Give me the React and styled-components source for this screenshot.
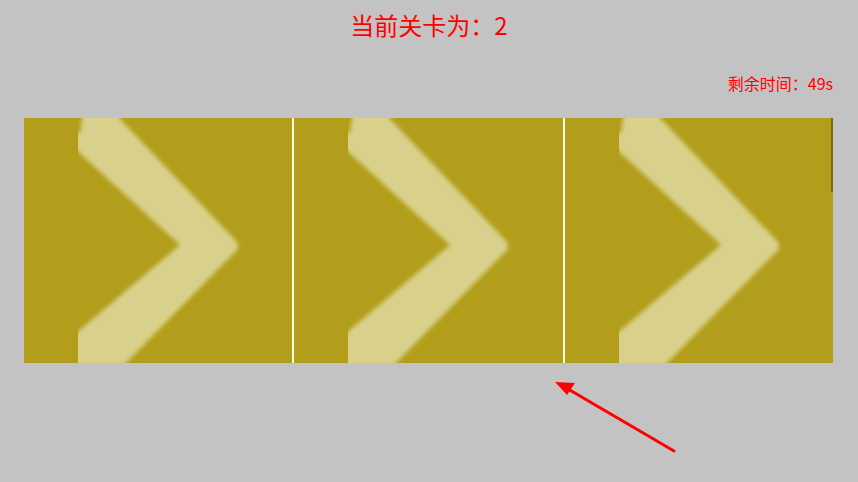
import React from "react";
import styled, { createGlobalStyle } from "styled-components";

const Global = createGlobalStyle`
  html, body { margin: 0; padding: 0; background: #c3c3c3; }
  body { font-family: "Noto Sans CJK SC", "Noto Sans", sans-serif; }
`;

const Page = styled.div`
  position: relative;
  width: 858px;
  height: 482px;
  box-sizing: border-box;
  padding: 8px 25px 0 24px;
  display: flex;
  flex-direction: column;
  background: #c3c3c3;
  overflow: hidden;
`;

const Title = styled.div`
  text-align: center;
  color: #ff0000;
  font-size: 24px;
  line-height: 34px;
  padding-left: 1px;
`;

const Timer = styled.div`
  margin-top: 30px;
  text-align: right;
  color: #ff0000;
  font-size: 16px;
  line-height: 22px;
`;

const Strip = styled.div`
  position: relative;
  margin-top: 24px;
  width: 809px;
  height: 245px;
  display: flex;
  gap: 2px;
  background: #fffbe8;
`;

const Tile = styled.div`
  flex: 1;
  position: relative;
  background: #b29e1a;
  overflow: hidden;
`;

const ScrollThumb = styled.div`
  position: absolute;
  right: 0;
  top: 0;
  width: 2px;
  height: 74px;
  background: #7a6b10;
`;

const ArrowLayer = styled.svg`
  position: absolute;
  left: 0;
  top: 0;
  pointer-events: none;
`;

function Chevron({ id }) {
  return (
    <svg width="268" height="245" viewBox="0 0 268 245" style={{ display: "block" }}>
      <defs>
        <filter id={`b${id}`} x="-20%" y="-20%" width="140%" height="140%">
          <feGaussianBlur stdDeviation="2.2" />
        </filter>
        <clipPath id={`c${id}`}>
          <rect x="54" y="0" width="214" height="245" />
        </clipPath>
      </defs>
      <g clipPath={`url(#c${id})`}>
        <polygon
          filter={`url(#b${id})`}
          fill="#d9d18b"
          points="59,-6 95,-6 95,0 213,124 214,131 96,251 44,251 44,222 156,127 48,28 48,15 56,15"
        />
      </g>
    </svg>
  );
}

export default function App() {
  return (
    <>
      <Global />
      <Page>
        <Title>当前关卡为：2</Title>
        <Timer>剩余时间：49s</Timer>
        <Strip>
          <Tile><Chevron id="1" /></Tile>
          <Tile><Chevron id="2" /></Tile>
          <Tile>
            <Chevron id="3" />
            <ScrollThumb />
          </Tile>
        </Strip>
        <ArrowLayer width="858" height="482" viewBox="0 0 858 482">
          <line x1="674" y1="451" x2="568" y2="389" stroke="#ff0000" strokeWidth="3" strokeLinecap="round" />
          <polygon points="555,382 575,383 567,395" fill="#ff0000" />
        </ArrowLayer>
      </Page>
    </>
  );
}
